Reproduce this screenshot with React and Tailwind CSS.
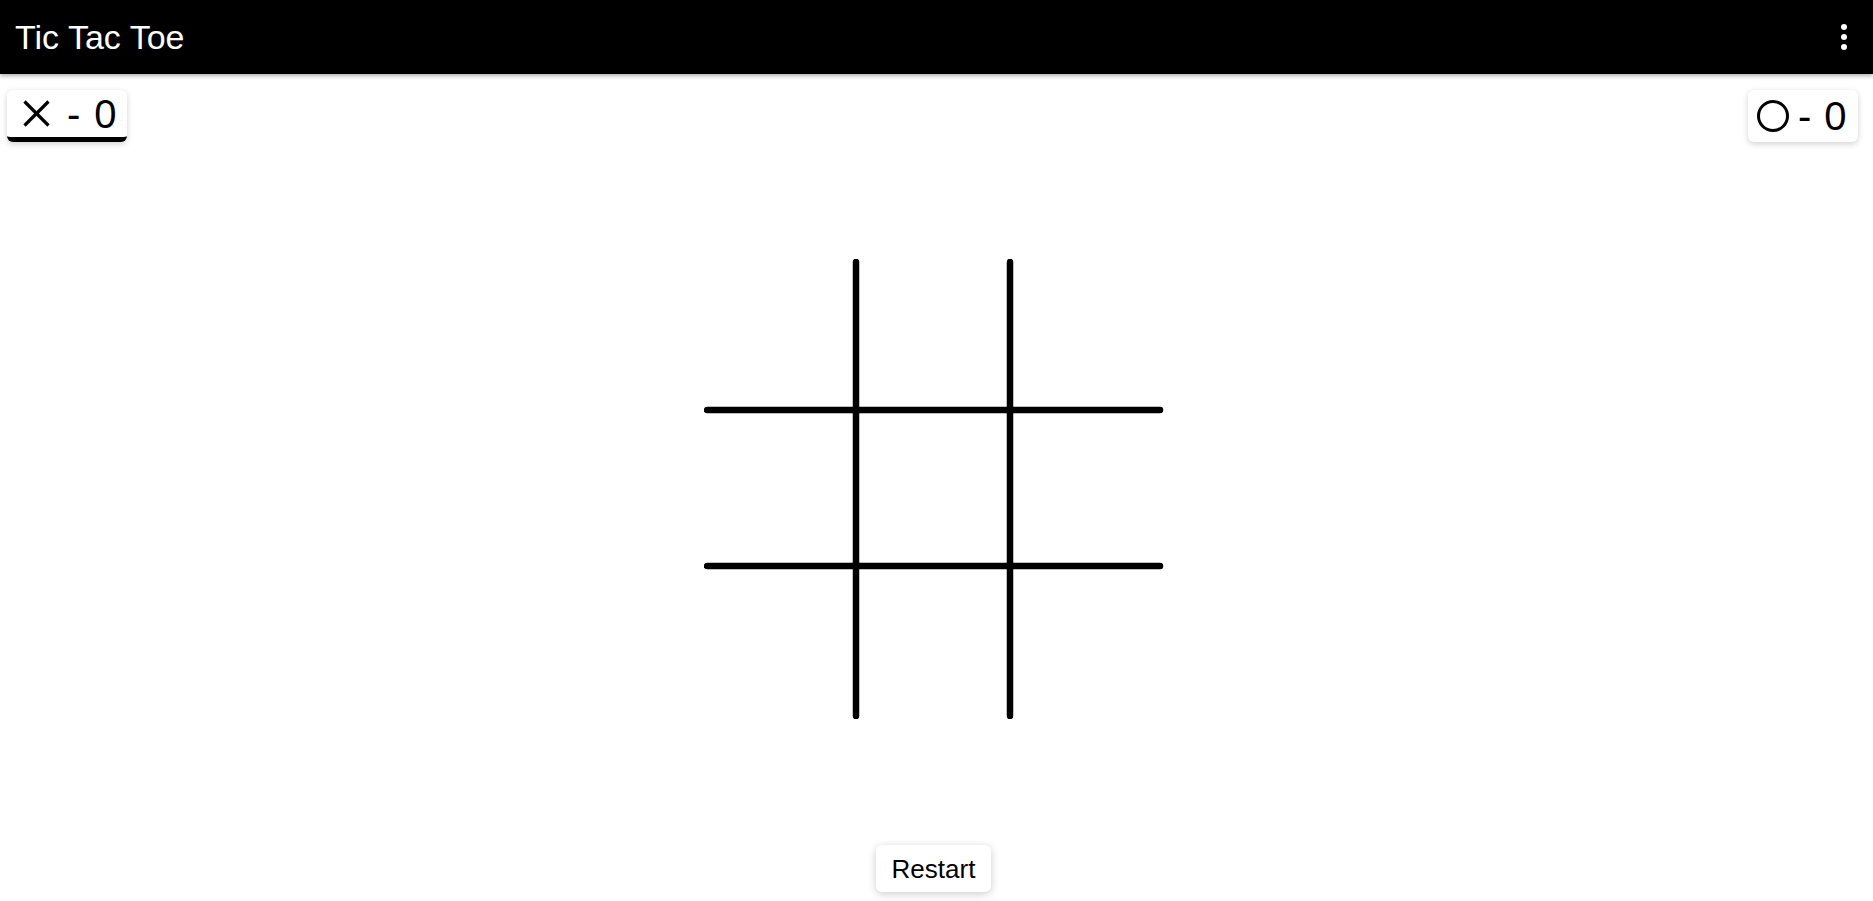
import { useState } from 'react'

const font = { fontFamily: '"Liberation Sans", Arial, sans-serif' }

function XMark({ size = 27 }) {
  return (
    <svg width={size} height={size} viewBox="0 0 27 27" fill="none" stroke="currentColor" strokeWidth="3.2">
      <line x1="1.5" y1="1.5" x2="25.5" y2="25.5" />
      <line x1="25.5" y1="1.5" x2="1.5" y2="25.5" />
    </svg>
  )
}

function OMark({ size = 32 }) {
  return (
    <svg width={size} height={size} viewBox="0 0 32 32" fill="none" stroke="currentColor" strokeWidth="3">
      <circle cx="16" cy="16" r="14.5" />
    </svg>
  )
}

export default function App() {
  const [cells, setCells] = useState(Array(9).fill(null))
  const [turn, setTurn] = useState('x')
  const [score] = useState({ x: 0, o: 0 })

  const play = i => {
    if (cells[i]) return
    const next = [...cells]
    next[i] = turn
    setCells(next)
    setTurn(turn === 'x' ? 'o' : 'x')
  }

  const restart = () => {
    setCells(Array(9).fill(null))
    setTurn('x')
  }

  return (
    <div className="h-screen w-full flex flex-col bg-white text-black overflow-hidden" style={font}>
      {/* Top bar */}
      <header className="h-[74px] shrink-0 bg-black text-white flex items-center justify-between pl-[15px] pr-[22px] shadow-[0_2px_4px_rgba(0,0,0,0.3)] z-10">
        <h1 className="text-[34px] leading-none">Tic Tac Toe</h1>
        <button className="flex flex-col gap-[4px] p-1">
          <span className="w-[6px] h-[6px] rounded-full bg-white"></span>
          <span className="w-[6px] h-[6px] rounded-full bg-white"></span>
          <span className="w-[6px] h-[6px] rounded-full bg-white"></span>
        </button>
      </header>

      {/* Scores */}
      <div className="flex justify-between items-start pt-[16px] pl-[7px] pr-[15px]">
        <div className={`w-[120px] h-[52px] flex items-center pl-[16px] rounded-[6px] bg-white shadow-[0_2px_6px_rgba(0,0,0,0.18)] text-[40px] leading-none ${turn === 'x' ? 'border-b-[5px] border-black' : ''}`}>
          <XMark />
          <span className="ml-[17px]">-</span>
          <span className="ml-[14px]">{score.x}</span>
        </div>
        <div className={`w-[110px] h-[52px] flex items-center pl-[9px] rounded-[6px] bg-white shadow-[0_2px_6px_rgba(0,0,0,0.18)] text-[40px] leading-none ${turn === 'o' ? 'border-b-[5px] border-black' : ''}`}>
          <OMark />
          <span className="ml-[9px]">-</span>
          <span className="ml-[13px]">{score.o}</span>
        </div>
      </div>

      {/* Board */}
      <main className="flex-1 flex items-center justify-center pb-[10px]">
        <div className="relative w-[460px] h-[460px] ml-[-6px]">
          <div className="grid grid-cols-3 grid-rows-3 w-full h-full">
            {cells.map((c, i) => (
              <button key={i} onClick={() => play(i)} className="flex items-center justify-center">
                {c === 'x' && <XMark size={90} />}
                {c === 'o' && <OMark size={100} />}
              </button>
            ))}
          </div>
          <svg className="absolute inset-0 pointer-events-none" width="460" height="460" viewBox="0 0 460 460" stroke="black" strokeWidth="6.5" strokeLinecap="round">
            <line x1="152" y1="3" x2="152" y2="457" />
            <line x1="306" y1="3" x2="306" y2="457" />
            <line x1="3" y1="151" x2="456" y2="151" />
            <line x1="3" y1="307" x2="456" y2="307" />
          </svg>
        </div>
      </main>

      {/* Restart */}
      <div className="flex justify-center pb-[9px] pr-[6px]">
        <button onClick={restart} className="h-[47px] px-[16px] rounded-[6px] bg-white shadow-[0_2px_8px_rgba(0,0,0,0.2)] text-[26px] leading-none">
          Restart
        </button>
      </div>
    </div>
  )
}
